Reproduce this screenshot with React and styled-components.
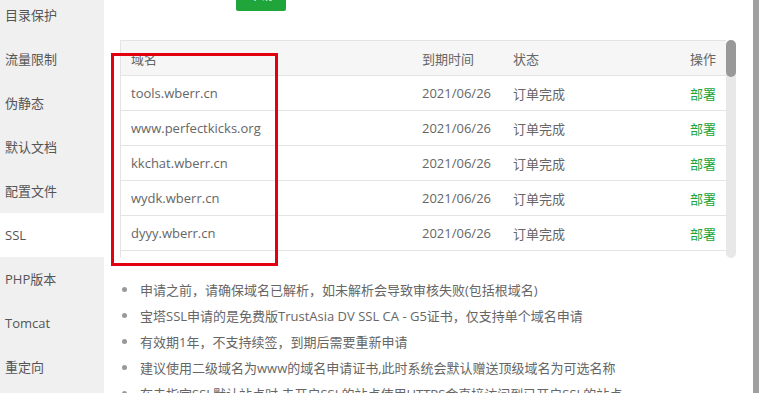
import React from 'react';
import styled, { createGlobalStyle } from 'styled-components';

const GlobalStyle = createGlobalStyle`
  html, body {
    margin: 0;
    padding: 0;
    overflow: hidden;
    background: #fff;
  }
  body {
    font-family: 'Open Sans', 'Noto Sans CJK SC', sans-serif;
    font-size: 13px;
    color: #666;
  }
`;

const Page = styled.div`
  position: relative;
  display: flex;
  align-items: flex-start;
  width: 759px;
  height: 393px;
  overflow: hidden;
`;

const Sidebar = styled.div`
  width: 104px;
  height: 420px;
  flex-shrink: 0;
  background: #f0f0f0;
  display: flex;
  flex-direction: column;
  margin-top: -7px;
`;

const SideItem = styled.div`
  flex-shrink: 0;
  height: 44px;
  line-height: 44px;
  padding-left: 5px;
  color: #555;
  font-size: 13px;
  background: ${p => (p.$active ? '#fff' : 'transparent')};
`;

const Main = styled.div`
  flex: 1;
  padding: 0 16px;
  margin-top: -19px;
  display: flex;
  flex-direction: column;

  & > * {
    flex-shrink: 0;
  }
`;

const ButtonRow = styled.div`
  display: flex;
  padding-left: 116px;
`;

const GreenButton = styled.button`
  width: 50px;
  height: 30px;
  border: none;
  border-radius: 2px;
  background: #20a53a;
  color: #fff;
  font-family: inherit;
  font-size: 12px;
  line-height: 30px;
  padding: 0;
`;

const ScrollArea = styled.div`
  margin-top: 29px;
  height: 218px;
  display: flex;
`;

const TableBox = styled.div`
  flex: 1;
  border-left: 1px solid #e4e4e4;
  border-top: 1px solid #e4e4e4;
  overflow: hidden;
`;

const Row = styled.div`
  display: grid;
  grid-template-columns: 291px 91px 1fr 80px;
  height: 34px;
  align-items: center;
  border-bottom: 1px solid #e4e4e4;
  background: ${p => (p.$head ? '#f6f6f6' : '#fff')};
  color: #666;
`;

const Cell = styled.div`
  padding: 0 10px;
  white-space: nowrap;
  text-align: ${p => (p.$right ? 'right' : 'left')};
  color: ${p => (p.$green ? '#20a53a' : 'inherit')};
`;

const ScrollTrack = styled.div`
  width: 10px;
  margin-right: 1px;
  background: #e8e8e8;
  border-radius: 5px;
  display: flex;
  flex-direction: column;
`;

const ScrollThumb = styled.div`
  height: 37px;
  background: #999;
  border-radius: 5px;
`;

const Tips = styled.ul`
  list-style: none;
  margin: 18px 0 0;
  padding: 0 0 0 2px;
`;

const Tip = styled.li`
  display: flex;
  align-items: center;
  height: 26px;
  white-space: nowrap;
  color: #666;

  &::before {
    content: '';
    width: 5px;
    height: 5px;
    border-radius: 50%;
    background: #999;
    margin-right: 13px;
    flex-shrink: 0;
  }
`;

const EdgeBar = styled.div`
  width: 6px;
  height: 393px;
  flex-shrink: 0;
  background: #a0a0a0;
`;

const Marker = styled.div`
  position: absolute;
  left: 111px;
  top: 53px;
  width: 161px;
  height: 207px;
  border: 3px solid #e3000f;
  pointer-events: none;
`;

const menu = ['目录保护', '流量限制', '伪静态', '默认文档', '配置文件', 'SSL', 'PHP版本', 'Tomcat', '重定向', '反向代理'];

const domains = [
  'tools.wberr.cn',
  'www.perfectkicks.org',
  'kkchat.wberr.cn',
  'wydk.wberr.cn',
  'dyyy.wberr.cn'
];

const tips = [
  '申请之前，请确保域名已解析，如未解析会导致审核失败(包括根域名)',
  '宝塔SSL申请的是免费版TrustAsia DV SSL CA - G5证书，仅支持单个域名申请',
  '有效期1年，不支持续签，到期后需要重新申请',
  '建议使用二级域名为www的域名申请证书,此时系统会默认赠送顶级域名为可选名称',
  '在未指定SSL默认站点时,未开启SSL的站点使用HTTPS会直接访问到已开启SSL的站点'
];

export default function App() {
  return (
    <Page>
      <GlobalStyle />
      <Sidebar>
        {menu.map(m => (
          <SideItem key={m} $active={m === 'SSL'}>
            {m}
          </SideItem>
        ))}
      </Sidebar>
      <Main>
        <ButtonRow>
          <GreenButton>申请</GreenButton>
        </ButtonRow>
        <ScrollArea>
          <TableBox>
            <Row $head>
              <Cell>域名</Cell>
              <Cell>到期时间</Cell>
              <Cell>状态</Cell>
              <Cell $right>操作</Cell>
            </Row>
            {domains.map(d => (
              <Row key={d}>
                <Cell>{d}</Cell>
                <Cell>2021/06/26</Cell>
                <Cell>订单完成</Cell>
                <Cell $right $green>部署</Cell>
              </Row>
            ))}
          </TableBox>
          <ScrollTrack>
            <ScrollThumb />
          </ScrollTrack>
        </ScrollArea>
        <Tips>
          {tips.map(t => (
            <Tip key={t}>{t}</Tip>
          ))}
        </Tips>
      </Main>
      <EdgeBar />
      <Marker />
    </Page>
  );
}
